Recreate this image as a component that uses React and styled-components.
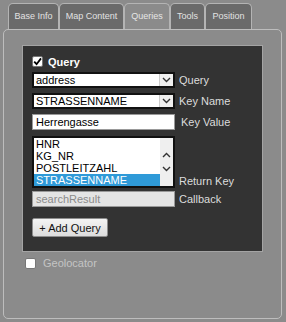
import React from 'react'
import styled, { createGlobalStyle, css } from 'styled-components'

const Global = createGlobalStyle`
  html, body {
    margin: 0;
    background: #8b8b8b;
    font-family: Arial, "Liberation Sans", sans-serif;
  }
`

const Root = styled.div`
  width: 286px;
  height: 322px;
  box-sizing: border-box;
  padding: 3px 4px 0 3px;
`

const TabBar = styled.div`
  display: flex;
  padding-left: 5px;
  height: 26px;
`

const Tab = styled.div`
  box-sizing: border-box;
  width: ${p => p.w}px;
  height: 26px;
  display: flex;
  align-items: center;
  justify-content: center;
  border: 1px solid #b4b4b4;
  border-bottom: none;
  border-radius: 5px 5px 0 0;
  background: #6a6a6a;
  color: #e2e2e2;
  font-size: 9px;
  padding-bottom: 1px;
  ${p => p.active && css`
    background: #8b8b8b;
    color: #e6e6e6;
  `}
`

const Panel = styled.div`
  box-sizing: border-box;
  height: 290px;
  border: 1px solid #bdbdbd;
  border-radius: 5px;
  padding: 15px 19px 0 18px;
`

const DarkBox = styled.div`
  box-sizing: border-box;
  width: 241px;
  height: 207px;
  background: #333;
  border: 1px solid #a4a4a4;
  padding: 9px 8px 0 9px;
`

const Header = styled.div`
  display: flex;
  align-items: center;
  gap: 5px;
  height: 13px;
  margin-bottom: 4px;
`

const Check = styled.span`
  box-sizing: border-box;
  width: 11px;
  height: 11px;
  background: #fff;
  border: 1px solid #777;
  border-radius: 2px;
  display: flex;
  align-items: center;
  justify-content: center;
`

const HeaderText = styled.span`
  color: #fff;
  font-weight: bold;
  font-size: 11px;
`

const Row = styled.div`
  display: flex;
  align-items: ${p => p.bottom ? 'flex-end' : 'center'};
  margin-bottom: ${p => p.mb ?? 5}px;
`

const Label = styled.span`
  color: #dcdcdc;
  font-size: 11px;
  margin-left: ${p => p.ml ?? 4}px;
  line-height: 13px;
`

const SelectBox = styled.div`
  box-sizing: border-box;
  width: 143px;
  height: 16px;
  background: #fff;
  border: 2px solid #111;
  display: flex;
  align-items: stretch;
  font-size: 11px;
  color: #000;
`

const SelectText = styled.span`
  flex: 1;
  padding-left: 2px;
  line-height: 12px;
`

const ArrowBtn = styled.span`
  width: 13px;
  background: #efefef;
  border-left: 1px solid #ccc;
  display: flex;
  align-items: center;
  justify-content: center;
`

const TextInput = styled.div`
  box-sizing: border-box;
  width: 143px;
  height: 16px;
  border: 1px solid #999;
  background: ${p => p.disabled ? '#e4e4e4' : '#fff'};
  color: ${p => p.disabled ? '#8a8a8a' : '#000'};
  font-size: 11px;
  line-height: 14px;
  padding-left: 3px;
`

const ListBox = styled.div`
  box-sizing: border-box;
  width: 143px;
  height: 52px;
  background: #fff;
  border: 2px solid #111;
  display: flex;
  overflow: hidden;
`

const ListItems = styled.div`
  flex: 1;
  display: flex;
  flex-direction: column;
  font-size: 11px;
  line-height: 12px;
`

const ListItem = styled.div`
  padding-left: 2px;
  color: ${p => p.selected ? '#fff' : '#000'};
  background: ${p => p.selected ? '#2f9ad8' : 'transparent'};
`

const ScrollBar = styled.div`
  width: 13px;
  background: #efefef;
  display: flex;
  flex-direction: column;
  align-items: center;
  justify-content: center;
  gap: 8px;
`

const Button = styled.div`
  box-sizing: border-box;
  width: 76px;
  height: 19px;
  margin-top: 11px;
  border: 1px solid #8d8d8d;
  border-radius: 2px;
  background: linear-gradient(#f4f4f4, #dcdcdc);
  color: #111;
  font-size: 11px;
  display: flex;
  align-items: center;
  justify-content: center;
`

const GeoRow = styled.div`
  display: flex;
  align-items: center;
  gap: 7px;
  margin: 5px 0 0 3px;
`

const GeoText = styled.span`
  color: #c4c4c4;
  font-size: 11px;
`

const Chevron = ({ up }) => (
  <svg width="9" height="6" viewBox="0 0 9 6">
    <path d={up ? 'M1 5 L4.5 1.5 L8 5' : 'M1 1 L4.5 4.5 L8 1'} fill="none" stroke="#333" strokeWidth="1.4" />
  </svg>
)

const Tick = () => (
  <svg width="9" height="9" viewBox="0 0 9 9">
    <path d="M1.2 4.6 L3.6 7.2 L8 1.4" fill="none" stroke="#000" strokeWidth="1.8" />
  </svg>
)

const Select = ({ value }) => (
  <SelectBox>
    <SelectText>{value}</SelectText>
    <ArrowBtn><Chevron /></ArrowBtn>
  </SelectBox>
)

const tabs = [
  { name: 'Base Info', w: 51 },
  { name: 'Map Content', w: 65 },
  { name: 'Queries', w: 46, active: true },
  { name: 'Tools', w: 35 },
  { name: 'Position', w: 47 },
]

export default function App() {
  return (
    <Root>
      <Global />
      <TabBar>
        {tabs.map(t => (
          <Tab key={t.name} w={t.w} active={t.active}>{t.name}</Tab>
        ))}
      </TabBar>
      <Panel>
        <DarkBox>
          <Header>
            <Check><Tick /></Check>
            <HeaderText>Query</HeaderText>
          </Header>
          <Row>
            <Select value="address" />
            <Label>Query</Label>
          </Row>
          <Row>
            <Select value="STRASSENNAME" />
            <Label>Key Name</Label>
          </Row>
          <Row mb={6}>
            <TextInput>Herrengasse</TextInput>
            <Label ml={6}>Key Value</Label>
          </Row>
          <Row bottom mb={3}>
            <ListBox>
              <ListItems>
                <ListItem>HNR</ListItem>
                <ListItem>KG_NR</ListItem>
                <ListItem>POSTLEITZAHL</ListItem>
                <ListItem selected>STRASSENNAME</ListItem>
              </ListItems>
              <ScrollBar>
                <Chevron up />
                <Chevron />
              </ScrollBar>
            </ListBox>
            <Label>Return Key</Label>
          </Row>
          <Row>
            <TextInput disabled>searchResult</TextInput>
            <Label>Callback</Label>
          </Row>
          <Button>+ Add Query</Button>
        </DarkBox>
        <GeoRow>
          <Check />
          <GeoText>Geolocator</GeoText>
        </GeoRow>
      </Panel>
    </Root>
  )
}
